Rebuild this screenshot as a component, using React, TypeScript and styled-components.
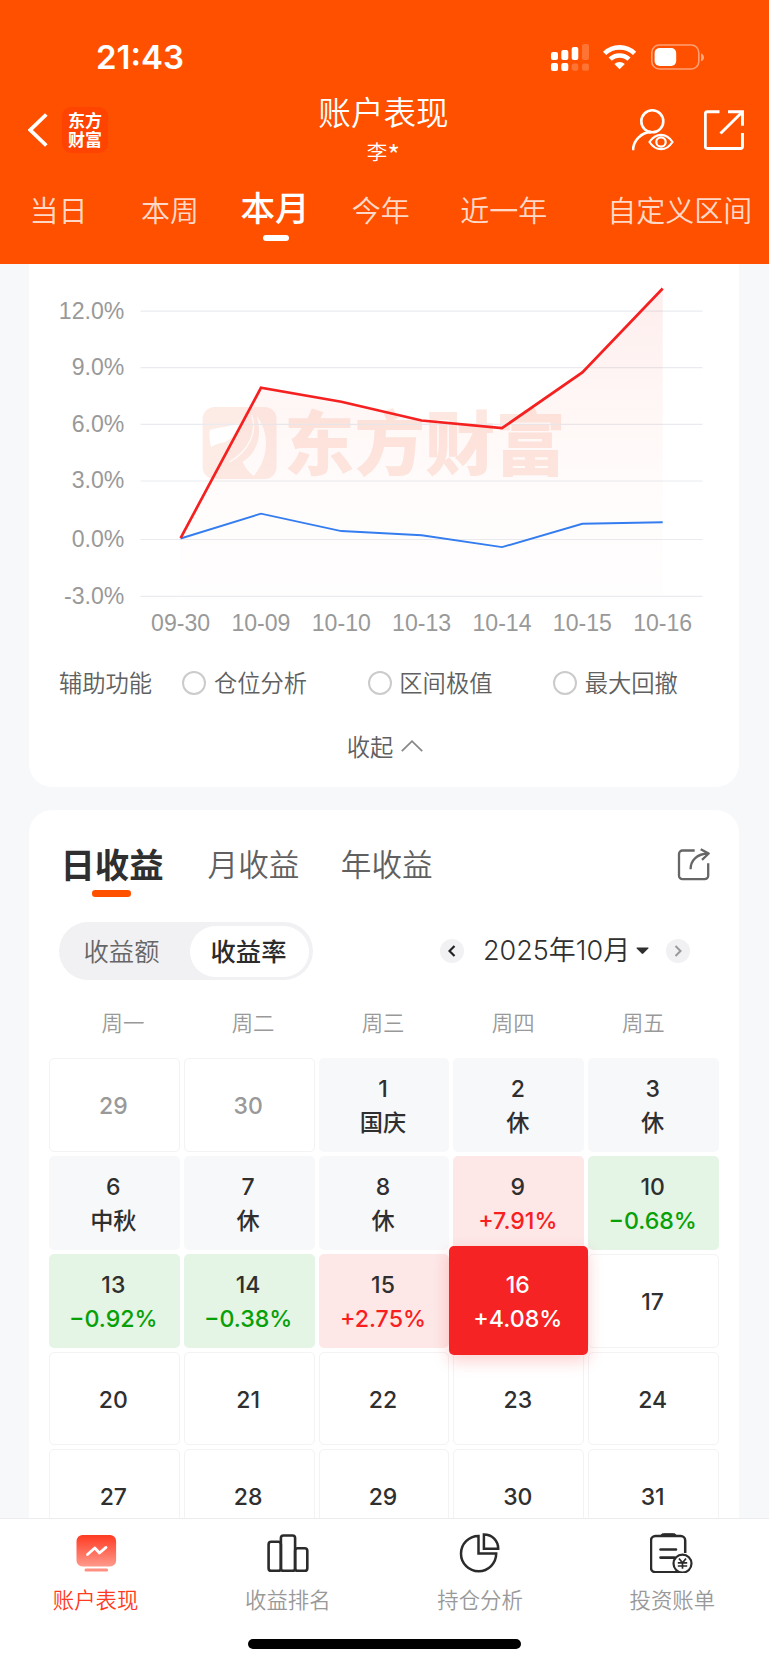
import React from 'react';
import styled, { createGlobalStyle, css } from 'styled-components';

const cjk = `"Noto Sans CJK SC", sans-serif`;
const mixed = `Inter, "Noto Sans CJK SC", sans-serif`;

const GlobalStyle = createGlobalStyle`
  * { box-sizing: border-box; }
  body { margin: 0; background: #f6f8fa; font-family: ${cjk}; }
  svg { display: block; flex: none; }
  button { border: 0; background: none; padding: 0; font: inherit; color: inherit; }
`;

const Screen = styled.div`
  width: 769px;
  height: 1665px;
  display: flex;
  flex-direction: column;
  overflow: hidden;
  background: #f6f8fa;
`;

/* ---------- header ---------- */

const Header = styled.header`
  height: 264px;
  flex: none;
  background: #ff5000;
  color: #fff;
`;

const StatusBar = styled.div`
  height: 90px;
  padding: 23px 65px 0 96px;
  display: flex;
  justify-content: space-between;
  align-items: center;
`;

const Clock = styled.span`
  font: 600 33px/40px ${mixed};
`;

const NavBar = styled.div`
  height: 80px;
  padding: 0 25px 0 28px;
  display: grid;
  grid-template-columns: 1fr auto 1fr;
`;

const NavSide = styled.div<{ $end?: boolean }>`
  display: flex;
  align-items: center;
  height: 79px;
  gap: ${(p) => (p.$end ? 30 : 14)}px;
  justify-content: ${(p) => (p.$end ? 'flex-end' : 'flex-start')};
`;

const Brand = styled.div`
  width: 46px;
  height: 46px;
  border-radius: 9px;
  background: #ff4300;
  font: 700 17px/19.5px ${cjk};
  text-align: center;
  padding-top: 3px;
`;

const TitleBlock = styled.div`
  display: flex;
  flex-direction: column;
  align-items: center;
  padding-right: 5px;
`;

const Title = styled.h1`
  margin: 1px 0 0;
  font: 350 32.6px/40px ${cjk};
`;

const Subtitle = styled.div`
  font: 350 20.5px/30px ${cjk};
  margin-top: 5px;
`;

const Mask = styled.span`
  font-size: 28px;
  line-height: 0;
  vertical-align: -6px;
`;

const Periods = styled.nav`
  height: 94px;
  display: flex;
  padding-left: 29.5px;
`;

const Period = styled.button<{ $active?: boolean; $before?: number }>`
  position: relative;
  flex: none;
  height: 82px;
  padding-bottom: 4px;
  margin-left: ${(p) => p.$before ?? 0}px;
  white-space: nowrap;
  font: 350 29px/60px ${cjk};
  color: rgba(255, 255, 255, 0.8);
  ${(p) =>
    p.$active &&
    css`
      font-size: 34.6px;
      font-weight: 500;
      padding-bottom: 11px;
      color: #fff;
      &::after {
        content: '';
        position: absolute;
        left: 22px;
        top: 65px;
        width: 26px;
        height: 6px;
        border-radius: 3px;
        background: #fff;
      }
    `}
`;

/* ---------- content ---------- */

const Body = styled.main`
  flex: 1;
  min-height: 0;
  overflow: hidden;
  padding: 0 30.4px 0 29.4px;
`;

const ChartCard = styled.section`
  height: 522.7px;
  background: #fff;
  border-radius: 0 0 23px 23px;
`;

const Options = styled.div`
  display: flex;
  align-items: center;
  height: 44px;
  margin-top: 20px;
  padding-left: 29.6px;
  font: 350 23.3px/42px ${cjk};
  color: #606060;
`;

const OptionsLabel = styled.span`
  width: 123.6px;
  padding-bottom: 2px;
`;

const Option = styled.label`
  display: flex;
  align-items: center;
  gap: 7.500px;
  width: 185.7px;
  span:last-child { padding-bottom: 2px; }
`;

const Radio = styled.span`
  width: 24px;
  height: 24px;
  border: 2px solid #cbcbcb;
  border-radius: 50%;
`;

const Collapse = styled.button`
  display: flex;
  align-items: center;
  margin: 19px auto 0;
  height: 44px;
  gap: 8px;
  padding-left: 2px;
  font: 350 23.3px/44px ${cjk};
  color: #606060;
`;

const CalendarCard = styled.section`
  margin-top: 23.3px;
  height: 800px;
  padding: 32px 0 0;
  background: #fff;
  border-radius: 23px 23px 0 0;
`;

const CardHead = styled.div`
  height: 46px;
  display: flex;
  align-items: center;
  padding: 0 29px 0 31px;
`;

const RangeTab = styled.button<{ $active?: boolean; $before?: number }>`
  position: relative;
  margin-left: ${(p) => p.$before ?? 0}px;
  padding-bottom: 4px;
  font: 350 30.6px/46px ${cjk};
  color: #606060;
  ${(p) =>
    p.$active &&
    css`
      font-size: 34.4px;
      font-weight: 700;
      color: #2f2f2f;
      &::after {
        content: '';
        position: absolute;
        left: 31.6px;
        top: 50px;
        width: 39px;
        height: 6.6px;
        border-radius: 3.3px;
        background: #ff5000;
      }
    `}
`;

const ShareButton = styled.button`
  margin-left: auto;
`;

const Controls = styled.div`
  display: flex;
  align-items: center;
  height: 58px;
  margin-top: 34px;
  padding-left: 29.6px;
`;

const Segmented = styled.div`
  display: flex;
  align-items: center;
  width: 254px;
  height: 58.4px;
  border-radius: 30px;
  background: #f1f1f4;
  padding: 4px;
`;

const Segment = styled.button<{ $active?: boolean }>`
  width: ${(p) => (p.$active ? 119 : 127)}px;
  height: 51px;
  border-radius: 26px;
  font: ${(p) => (p.$active ? 500 : 350)} 25.3px/48px ${cjk};
  color: ${(p) => (p.$active ? '#2b2b2b' : '#666')};
  background: ${(p) => (p.$active ? '#fff' : 'transparent')};
  padding: 0 ${(p) => (p.$active ? 2 : 10)}px 2px 0;
`;

const MonthPicker = styled.div`
  display: flex;
  align-items: center;
  margin-left: 127px;
`;

const Step = styled.button`
  width: 24px;
  height: 24px;
  border-radius: 50%;
  background: #f1f1f4;
  display: flex;
  align-items: center;
  justify-content: center;
`;

const Month = styled.span`
  display: flex;
  align-items: center;
  gap: 6px;
  width: 166px;
  margin: 0 17px 0 19px;
  padding-top: 1px;
  font: 350 27px/40px ${mixed};
  color: #2f2f2f;
  white-space: nowrap;
`;

const Weekdays = styled.div`
  display: grid;
  grid-template-columns: repeat(5, 130.1px);
  margin: 27px 0 0 28.500px;
  font: 350 21.4px/30px ${cjk};
  color: #999;
  text-align: center;
`;

const Days = styled.div`
  display: grid;
  grid-template-columns: repeat(5, 130.7px);
  grid-auto-rows: 93.8px;
  gap: 4px 4.15px;
  margin: 21.3px 0 0 19.6px;
`;

type Kind = 'plain' | 'muted' | 'rest' | 'up' | 'down' | 'selected';

const fills: Record<Kind, string> = {
  plain: '#fff',
  muted: '#fff',
  rest: '#f7f8fa',
  up: '#fde7e7',
  down: '#e4f4e5',
  selected: '#f52324',
};

const noteColors: Record<Kind, string> = {
  plain: '#2f2f2f',
  muted: '#999',
  rest: '#2f2f2f',
  up: '#f8201f',
  down: '#07a007',
  selected: '#fff',
};

const Day = styled.div<{ $kind: Kind }>`
  display: flex;
  flex-direction: column;
  align-items: center;
  justify-content: center;
  padding: 2px 2px 0 0;
  border-radius: 5px;
  border: 1px solid ${(p) => (p.$kind === 'plain' || p.$kind === 'muted' ? '#f3f3f4' : 'transparent')};
  background: ${(p) => fills[p.$kind]};
  color: ${(p) => (p.$kind === 'muted' ? '#999' : p.$kind === 'selected' ? '#fff' : '#2f2f2f')};
  font: 500 23px/34px ${mixed};
  ${(p) =>
    p.$kind === 'selected' &&
    css`
      position: relative;
      z-index: 1;
      margin: -7.6px -4px;
      border: 0;
      box-shadow: 0 6px 16px rgba(245, 35, 36, 0.22);
    `}
`;

const Note = styled.span<{ $kind: Kind }>`
  font-size: 23.2px;
  color: ${(p) => noteColors[p.$kind]};
`;

/* ---------- bottom bar ---------- */

const TabBar = styled.nav`
  height: 147px;
  flex: none;
  background: #fff;
  border-top: 1px solid #ececee;
  display: flex;
  flex-direction: column;
  align-items: center;
`;

const TabItems = styled.div`
  width: 100%;
  display: grid;
  grid-template-columns: repeat(4, 1fr);
  height: 120px;
`;

const TabItem = styled.button<{ $active?: boolean }>`
  display: flex;
  flex-direction: column;
  align-items: center;
  padding: 12px 1px 0 0;
  font: 350 21.4px/30px ${cjk};
  color: ${(p) => (p.$active ? '#ff3a20' : '#999')};
  svg { margin-bottom: 11px; }
`;

const HomeBar = styled.div`
  width: 273px;
  height: 10px;
  border-radius: 5px;
  background: #000;
`;

/* ---------- icons ---------- */

const StatusIcons = () => (
  <svg width="154" height="28" viewBox="550 43 154 28" fill="#fff">
    <rect x="551" y="52" width="7" height="8" rx="2" />
    <rect x="561.3" y="50" width="7" height="10" rx="2" />
    <rect x="571.7" y="47" width="6.6" height="13" rx="2" />
    <rect x="582" y="44" width="7" height="16" rx="2" opacity=".2" />
    <rect x="551" y="63" width="7" height="8" rx="2" />
    <rect x="561.3" y="63" width="7" height="8" rx="2" />
    <rect x="571.7" y="63.5" width="6.6" height="7.3" rx="2" opacity=".2" />
    <rect x="582" y="63.5" width="7" height="7.3" rx="2" opacity=".2" />
    <g fill="none" stroke="#fff" strokeWidth="4.6">
      <path d="M604.6 53.4a21.6 21.6 0 0 1 30 0" />
      <path d="M610.2 59.2a13.6 13.6 0 0 1 18.8 0" />
    </g>
    <path d="M619.6 69.3l-5.2-5.2a7.6 7.6 0 0 1 10.4 0z" />
    <rect x="651.8" y="45" width="47" height="24" rx="7.5" fill="none" stroke="#fff" strokeWidth="1.6" opacity=".45" />
    <rect x="654.6" y="48" width="21.6" height="18" rx="5" />
    <path d="M701 53.5c4 1 4 6.8 0 7.8z" opacity=".5" />
  </svg>
);

const BackIcon = () => (
  <svg width="20" height="34" viewBox="28 113 20 34" fill="none" stroke="#fff" strokeWidth="3.8">
    <path d="M46.300 114.500L30.300 130l16 15.500" />
  </svg>
);

const AccountIcon = () => (
  <svg width="42" height="42" viewBox="632 108.5 42 42" fill="none" stroke="#fff" strokeWidth="2.6">
    <circle cx="652.3" cy="120.8" r="11" />
    <path d="M633 149.800c.2-9.800 8.300-18 18-18.200" />
    <path d="M649.5 141.5c6.2-9.6 16.8-9.6 23 0c-6.2 9.6-16.8 9.6-23 0z" strokeWidth="2.2" />
    <circle cx="661" cy="141.5" r="4.7" strokeWidth="2.2" />
  </svg>
);

const ExportIcon = () => (
  <svg width="40" height="40" viewBox="704 109 40 40" fill="none" stroke="#fff" strokeWidth="2.9">
    <path d="M719.5 110.7h-12.2a2 2 0 0 0-2 2v32.8a2 2 0 0 0 2 2h33.200a2 2 0 0 0 2-2v-13.500" />
    <path d="M728 110.7h14.500v14M742 111.200L720.500 132.500" />
  </svg>
);

const ShareIcon = () => (
  <svg width="33" height="33" viewBox="677 848 33 33" fill="none" stroke="#666" strokeWidth="2.3" strokeLinejoin="round">
    <path d="M694.7 850.5h-12.2a3.500 3.500 0 0 0-3.500 3.500v21.700a3.500 3.500 0 0 0 3.500 3.500h22.200a3.500 3.500 0 0 0 3.500-3.500v-12.500" />
    <path d="M690.6 869.300c0-9 6.500-15.500 17.500-15.800M700.700 849.200l8 4.300l-6.700 6.300" />
  </svg>
);

const AccountTabIcon = () => (
  <svg width="42" height="42" viewBox="74.500 1531 42 42">
    <defs>
      <linearGradient id="accountFill" x1="0" y1="0" x2="0" y2="1">
        <stop offset="0" stopColor="#ff3a22" />
        <stop offset="1" stopColor="#ff9a8c" />
      </linearGradient>
    </defs>
    <rect x="76" y="1535" width="39.6" height="31.5" rx="6" fill="url(#accountFill)" />
    <rect x="84" y="1568.5" width="23.6" height="3" rx="1.5" fill="#ff8f80" />
    <path d="M87 1554.500l7.300-6.500l4.700 5l6.500-5.600" fill="none" stroke="#fff" strokeWidth="2.8" strokeLinecap="round" strokeLinejoin="round" />
  </svg>
);

const RankIcon = () => (
  <svg width="42" height="42" viewBox="267.300 1531 42 42" fill="none" stroke="#2b2b2b" strokeWidth="2.6">
    <rect x="268.9" y="1541.8" width="12.3" height="29" rx="2.6" />
    <rect x="281.2" y="1535.5" width="14.2" height="35.3" rx="2.6" />
    <rect x="295.4" y="1548.2" width="12.2" height="22.6" rx="2.6" />
  </svg>
);

const PieIcon = () => (
  <svg width="42" height="42" viewBox="459.5 1531 42 42" fill="none" stroke="#2b2b2b" strokeWidth="2.5">
    <path d="M479 1536a17.600 17.600 0 1 0 17.700 17.600H479z" />
    <path d="M484.400 1534.500v14.300h14.300c0-8.200-6-14.300-14.300-14.300z" />
  </svg>
);

const BillIcon = () => (
  <svg width="44" height="42" viewBox="650.500 1531 44 42" fill="none" stroke="#2b2b2b" strokeWidth="2.5">
    <path d="M685.700 1553v-12.500a4.500 4.500 0 0 0-4.500-4.500h-25.200a4.500 4.500 0 0 0-4.500 4.500v27.200a4.500 4.500 0 0 0 4.500 4.500h25" />
    <path d="M661.500 1536c0-2 1-2.300 2.500-2.300h10c1.500 0 2.500.3 2.500 2.300z" fill="#2b2b2b" strokeWidth="1" />
    <path d="M661 1549.500h15.500M661 1557.600h14" strokeWidth="2.600" strokeLinecap="round" />
    <circle cx="683" cy="1563.600" r="9" fill="#fff" strokeWidth="2.200" />
    <path d="M679.500 1558.500l3.500 4.300l3.500-4.300M683 1562.800v6M678.300 1562.800h9.400M678.300 1566h9.400" strokeWidth="1.700" />
  </svg>
);

/* ---------- chart ---------- */

const dates = ['09-30', '10-09', '10-10', '10-13', '10-14', '10-15', '10-16'];
const accountLine = [0.05, 7.91, 7.18, 6.2, 5.8, 8.71, 13.1];
const indexLine = [0.03, 1.33, 0.42, 0.2, -0.42, 0.8, 0.88];
const ticks = [12, 9, 6, 3, 0, -3];
const tickY = [311.2, 367.7, 424.3, 481, 539.5, 596.3];

const px = (i: number) => 181 + i * 80.35;
const py = (v: number) => 539.1 - v * 19.13;
const toPoints = (values: number[]) => values.map((v, i) => `${px(i)},${py(v)}`).join(' ');

const Chart = () => (
  <svg width="709" height="377" viewBox="29.4 264 709 377" fontFamily='"Liberation Sans", sans-serif' fontSize="23.1" fill="#999">
    <defs>
      <linearGradient id="area" gradientUnits="userSpaceOnUse" x1="0" y1="289" x2="0" y2="596">
        <stop offset="0" stopColor="#f52324" stopOpacity=".08" />
        <stop offset=".65" stopColor="#f86040" stopOpacity=".022" />
        <stop offset="1" stopColor="#f86040" stopOpacity=".006" />
      </linearGradient>
    </defs>
    <rect x="203" y="407" width="74" height="72" rx="12" fill="#fdebe6" />
    <path d="M210 430C220 427 229 427 240 423C237 432 232 441 222 443C217 444 214 445 211.500 447Q209 438 210 430z" fill="#fff" />
    <path d="M257 416C270 432 270 458 254 476C249 472 246 468 243 462C258 452 263 436 257 416z" fill="#fff" />
    <path d="M252 415C258 432 250 450 230 462" fill="none" stroke="#fff" strokeWidth="1.4" />
    <text x="284.5" y="470" fontFamily='"Noto Sans CJK SC", sans-serif' fontWeight="900" fontSize="70.4" fill="#fde8e1">东方财富</text>
    {ticks.map((t, i) => (
      <g key={t}>
        <line x1="141" x2="703" y1={tickY[i]} y2={tickY[i]} stroke="#e9ebf0" strokeWidth="1.2" />
        <text x="124.7" y={tickY[i] + 7.4} textAnchor="end">{t.toFixed(1)}%</text>
      </g>
    ))}
    <polygon points={`${px(0)},596 ${toPoints(accountLine)} ${px(6)},596`} fill="url(#area)" />
    <polyline points={toPoints(indexLine)} fill="none" stroke="#347df0" strokeWidth="1.9" />
    <polyline points={toPoints(accountLine)} fill="none" stroke="#f52020" strokeWidth="2.7" />
    {dates.map((d, i) => (
      <text key={d} x={px(i)} y="631.3" textAnchor="middle">{d}</text>
    ))}
  </svg>
);

/* ---------- calendar data ---------- */

const days: { day: number; kind: Kind; note?: string }[] = [
  { day: 29, kind: 'muted' },
  { day: 30, kind: 'muted' },
  { day: 1, kind: 'rest', note: '国庆' },
  { day: 2, kind: 'rest', note: '休' },
  { day: 3, kind: 'rest', note: '休' },
  { day: 6, kind: 'rest', note: '中秋' },
  { day: 7, kind: 'rest', note: '休' },
  { day: 8, kind: 'rest', note: '休' },
  { day: 9, kind: 'up', note: '+7.91%' },
  { day: 10, kind: 'down', note: '−0.68%' },
  { day: 13, kind: 'down', note: '−0.92%' },
  { day: 14, kind: 'down', note: '−0.38%' },
  { day: 15, kind: 'up', note: '+2.75%' },
  { day: 16, kind: 'selected', note: '+4.08%' },
  { day: 17, kind: 'plain' },
  ...[20, 21, 22, 23, 24, 27, 28, 29, 30, 31].map((day) => ({ day, kind: 'plain' as Kind })),
];

export default function App() {
  return (
    <Screen>
      <GlobalStyle />
      <Header>
        <StatusBar>
          <Clock>21:43</Clock>
          <StatusIcons />
        </StatusBar>
        <NavBar>
          <NavSide>
            <BackIcon />
            <Brand>东方<br />财富</Brand>
          </NavSide>
          <TitleBlock>
            <Title>账户表现</Title>
            <Subtitle>李<Mask>*</Mask></Subtitle>
          </TitleBlock>
          <NavSide $end>
            <AccountIcon />
            <ExportIcon />
          </NavSide>
        </NavBar>
        <Periods>
          <Period>当日</Period>
          <Period $before={53.5}>本周</Period>
          <Period $before={41.5} $active>本月</Period>
          <Period $before={42}>今年</Period>
          <Period $before={50.5}>近一年</Period>
          <Period $before={60}>自定义区间</Period>
        </Periods>
      </Header>
      <Body>
        <ChartCard>
          <Chart />
          <Options>
            <OptionsLabel>辅助功能</OptionsLabel>
            {['仓位分析', '区间极值', '最大回撤'].map((name) => (
              <Option key={name}>
                <Radio />
                <span>{name}</span>
              </Option>
            ))}
          </Options>
          <Collapse>
            收起
            <svg width="22" height="14" viewBox="0 0 22 14" fill="none" stroke="#888" strokeWidth="1.8">
              <path d="M.8 12.2L11 2.200l10.200 10" />
            </svg>
          </Collapse>
        </ChartCard>
        <CalendarCard>
          <CardHead>
            <RangeTab $active>日收益</RangeTab>
            <RangeTab $before={44}>月收益</RangeTab>
            <RangeTab $before={41.5}>年收益</RangeTab>
            <ShareButton><ShareIcon /></ShareButton>
          </CardHead>
          <Controls>
            <Segmented>
              <Segment>收益额</Segment>
              <Segment $active>收益率</Segment>
            </Segmented>
            <MonthPicker>
              <Step>
                <svg width="8" height="12" viewBox="0 0 8 12" fill="none" stroke="#222" strokeWidth="2.2"><path d="M6.500 1L1.500 6l5 5" /></svg>
              </Step>
              <Month>
                2025年10月
                <svg width="13" height="8" viewBox="0 0 13 8" fill="#2f2f2f"><path d="M1 .5h11q.8.2.3 1L7.300 6.600q-.8.700-1.600 0L.7 1.500Q.3.700 1 .5z" /></svg>
              </Month>
              <Step>
                <svg width="8" height="12" viewBox="0 0 8 12" fill="none" stroke="#999" strokeWidth="2"><path d="M1.500 1l5 5l-5 5" /></svg>
              </Step>
            </MonthPicker>
          </Controls>
          <Weekdays>
            {['周一', '周二', '周三', '周四', '周五'].map((w) => (
              <span key={w}>{w}</span>
            ))}
          </Weekdays>
          <Days>
            {days.map(({ day, kind, note }, i) => (
              <Day key={i} $kind={kind}>
                <span>{day}</span>
                {note && <Note $kind={kind}>{note}</Note>}
              </Day>
            ))}
          </Days>
        </CalendarCard>
      </Body>
      <TabBar>
        <TabItems>
          <TabItem $active><AccountTabIcon />账户表现</TabItem>
          <TabItem><RankIcon />收益排名</TabItem>
          <TabItem><PieIcon />持仓分析</TabItem>
          <TabItem><BillIcon />投资账单</TabItem>
        </TabItems>
        <HomeBar />
      </TabBar>
    </Screen>
  );
}
